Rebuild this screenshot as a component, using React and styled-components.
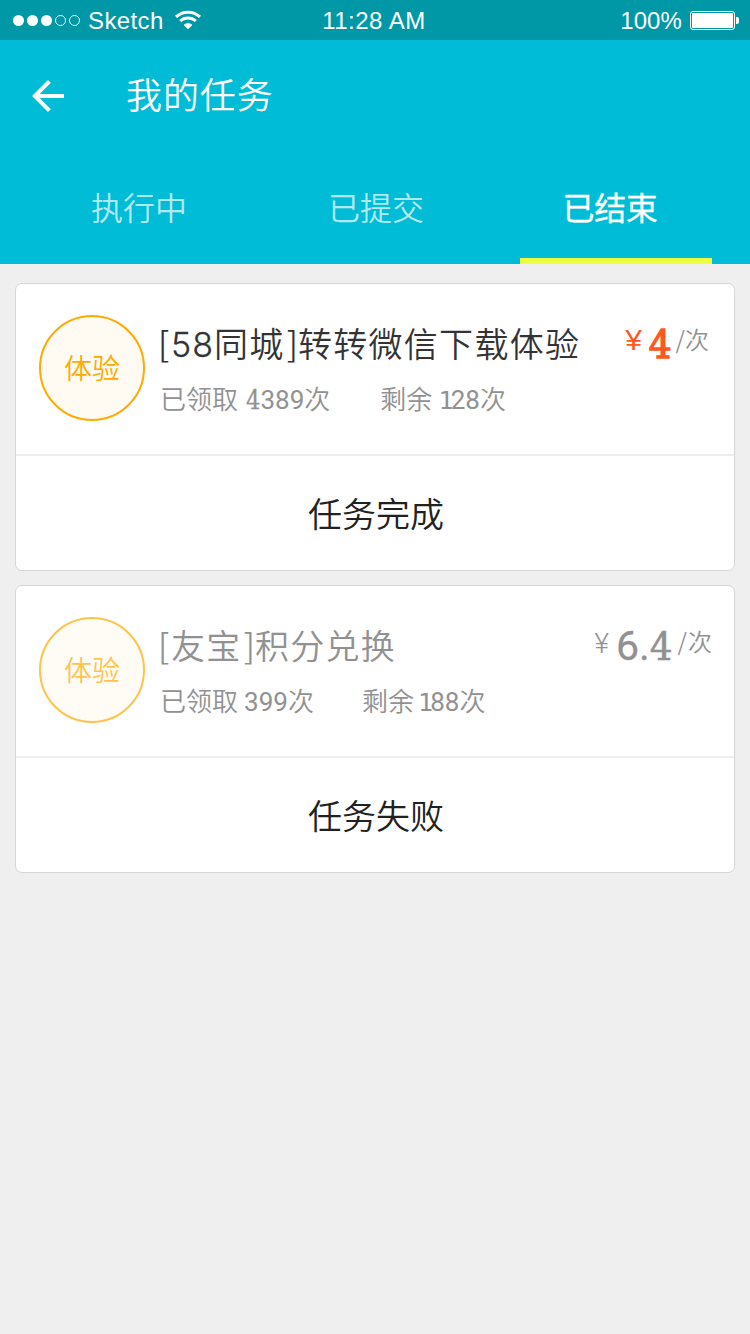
import React from "react";
import styled, { createGlobalStyle } from "styled-components";

const cjk = '"Noto Sans CJK SC", sans-serif';

const GlobalStyle = createGlobalStyle`
  * { box-sizing: border-box; }
  body { margin: 0; background: #efefef; }
`;

const Screen = styled.div`
  width: 750px;
  min-height: 1334px;
  background: #efefef;
  font-family: ${cjk};
  white-space: nowrap;
`;

const StatusBar = styled.div`
  display: grid;
  grid-template-columns: 1fr auto 1fr;
  align-items: center;
  height: 40px;
  padding: 0 11px 0 12px;
  background: #0097a7;
  color: #fff;
  font: 24px/42px "Liberation Sans", sans-serif;
`;

const StatusGroup = styled.div`
  display: flex;
  align-items: center;
  justify-content: ${(p) => (p.$end ? "flex-end" : "flex-start")};
  gap: 8px;
  height: 40px;
`;

const StatusText = styled.span`
  height: 40px;
  padding-right: ${(p) => p.$trail || 0}px;
  letter-spacing: ${(p) => p.$spacing || 0}px;
`;

const AppBar = styled.header`
  display: flex;
  align-items: center;
  height: 112px;
  padding-left: 24px;
  gap: 54px;
  background: #00bcd7;
`;

const PageTitle = styled.h1`
  margin: 0;
  color: #fff;
  font-size: 36px;
  font-weight: 350;
  line-height: 107px;
  height: 112px;
  letter-spacing: 0.9px;
`;

const Tabs = styled.nav`
  display: flex;
  height: 112px;
  padding-left: 43px;
  gap: 45px;
  background: #00bcd7;
`;

const Tab = styled.div`
  width: 192px;
  height: 112px;
  text-align: center;
  font-size: 32px;
  line-height: 108px;
  font-weight: ${(p) => (p.$active ? 400 : 350)};
  color: ${(p) => (p.$active ? "#fff" : "rgba(255, 255, 255, 0.7)")};
  ${(p) =>
    p.$active &&
    `
    margin-left: 3px;
    padding-right: 12px;
    letter-spacing: -0.3px;
    border-bottom: 6px solid #eeff41;
    -webkit-text-stroke: 0.3px #fff;
  `}
`;

const List = styled.main`
  display: flex;
  flex-direction: column;
  gap: 14px;
  padding: 19px 15px;
`;

const Card = styled.article`
  height: 288px;
  border: 1px solid #d6d6d6;
  border-radius: 7px;
  background: #fff;
`;

const Summary = styled.div`
  display: flex;
  height: 172px;
  padding: 31px 0 0 23px;
  border-bottom: 2px solid #eeeeee;
`;

const Badge = styled.div`
  flex: none;
  width: 106px;
  height: 106px;
  border: 2px solid #ffaa00;
  border-radius: 50%;
  background: #fffaf2;
  color: #ffaa00;
  font-size: 28px;
  font-weight: 350;
  line-height: 100px;
  text-align: center;
  opacity: ${(p) => (p.$faded ? 0.7 : 1)};
`;

const Details = styled.div`
  flex: 1;
  padding-left: 13px;
`;

const TaskTitle = styled.h2`
  margin: 0;
  height: 56px;
  font: 350 34px/56px ${cjk};
  letter-spacing: 1.3px;
  color: ${(p) => (p.$muted ? "#919191" : "#333")};
`;

const TitleDigits = styled.span`
  font-family: Inter, sans-serif;
  font-weight: 300;
  font-size: 34px;
  letter-spacing: 1px;
  -webkit-text-stroke: 0.3px currentColor;
`;

const OpenBracket = styled.span`
  letter-spacing: 1.8px;
`;

const CloseBracket = styled.span`
  padding-left: 2px;
  letter-spacing: 0;
`;

const Stats = styled.div`
  display: flex;
  gap: ${(p) => p.$gap}px;
  padding-left: 2px;
  color: #919191;
  font: 350 26px/58px Roboto, ${cjk};
`;

const Stat = styled.span`
  display: flex;
  gap: ${(p) => p.$gap}px;
`;

const Digits = styled.span`
  font-weight: 400;
`;

const SlabFour = styled.span`
  font-family: "DejaVu Serif Condensed", "DejaVu Serif", serif;
  font-stretch: condensed;
  font-size: 0.97em;
  font-weight: 400;
  -webkit-text-stroke: 0.01em currentColor;
`;

const SlabOne = styled.span`
  font-family: "DejaVu Sans Mono", monospace;
  font-size: 0.96em;
  margin-left: -0.08em;
  letter-spacing: -0.11em;
`;

const Price = styled.div`
  display: flex;
  height: 56px;
  padding-right: ${(p) => p.$right}px;
  color: ${(p) => (p.$muted ? "#919191" : "#ff5722")};
`;

const Currency = styled.span`
  font: ${(p) =>
    p.$muted
      ? "300 28px/53px Roboto, sans-serif"
      : '400 30px/50px "Liberation Sans", sans-serif'};
  margin-right: 7px;
`;

const Amount = styled.span`
  font: 400 41px/58px Roboto, sans-serif;
  -webkit-text-stroke: ${(p) => (p.$muted ? 0.3 : 0.4)}px currentColor;

  ${SlabFour} {
    -webkit-text-stroke: ${(p) => (p.$muted ? 0.6 : 1.4)}px currentColor;
  }
`;

const Unit = styled.span`
  margin-left: ${(p) => (p.$muted ? 5 : 4)}px;
  color: #919191;
  font-size: 24px;
  font-weight: 350;
  line-height: 47px;
  letter-spacing: ${(p) => (p.$muted ? 1 : 0)}px;
`;

const Result = styled.div`
  height: 114px;
  padding: 1px 0 0 2px;
  color: #212121;
  font-size: 34px;
  font-weight: 350;
  line-height: 112px;
  text-align: center;
`;

const WifiIcon = styled.svg`
  margin-left: 2px;
`;

const SignalDots = () => (
  <svg width="68" height="14" viewBox="0 0 68 14" fill="#fff">
    {[6.5, 20.5, 34.5].map((x) => (
      <circle key={x} cx={x} cy="7.5" r="5.5" />
    ))}
    {[48.5, 62.5].map((x) => (
      <circle key={x} cx={x} cy="7.5" r="5" fill="none" stroke="#fff" />
    ))}
  </svg>
);

const Wifi = () => (
  <WifiIcon width="28" height="20" viewBox="0 0 28 20" fill="none" stroke="#fff">
    <path d="M2 6.9a17.5 17.5 0 0 1 24 0" strokeWidth="3" />
    <path d="M6.2 11.1a11.4 11.4 0 0 1 15.6 0" strokeWidth="2.8" />
    <path d="M14 18.8l-4-3.7a6 6 0 0 1 8 0z" fill="#fff" stroke="#fff" strokeWidth="0.8" />
  </WifiIcon>
);

const Battery = () => (
  <svg width="49" height="20" viewBox="0 0 49 20" fill="#fff">
    <rect x="0.5" y="1.5" width="44" height="18" rx="2.5" fill="none" stroke="#fff" />
    <rect x="2" y="3" width="41" height="15" rx="1" />
    <path d="M46 7h1a2 2 0 0 1 2 2v3a2 2 0 0 1-2 2h-1z" />
  </svg>
);

const BackArrow = () => (
  <svg width="48" height="48" viewBox="0 0 24 24" fill="#fff">
    <path d="M20 11H7.83l5.59-5.59L12 4l-8 8 8 8 1.41-1.41L7.83 13H20v-2z" />
  </svg>
);

const SlabNumber = ({ value }) =>
  value.split("").map((c, i) => {
    if (c === "4") return <SlabFour key={i}>{c}</SlabFour>;
    if (c === "1") return <SlabOne key={i}>{c}</SlabOne>;
    return c;
  });

const tasks = [
  {
    source: "58同城",
    name: "转转微信下载体验",
    taken: "4389",
    left: "128",
    price: "4",
    result: "任务完成",
    numberGap: 8,
    statGap: 50,
    right: 25,
  },
  {
    source: "友宝",
    name: "积分兑换",
    taken: "399",
    left: "188",
    price: "6.4",
    result: "任务失败",
    muted: true,
    numberGap: 6,
    statGap: 48,
    right: 21,
  },
];

const TaskStat = ({ label, value, gap }) => (
  <Stat $gap={gap}>
    <span>{label}</span>
    <span>
      <Digits>
        <SlabNumber value={value} />
      </Digits>
      次
    </span>
  </Stat>
);

const TaskCard = ({ task }) => (
  <Card>
    <Summary>
      <Badge $faded={task.muted}>体验</Badge>
      <Details>
        <TaskTitle $muted={task.muted}>
          <OpenBracket>[</OpenBracket>
          {task.source
            .split(/(\d+)/)
            .map((part, i) => (i % 2 ? <TitleDigits key={i}>{part}</TitleDigits> : part))}
          <CloseBracket>]</CloseBracket>
          {task.name}
        </TaskTitle>
        <Stats $gap={task.statGap}>
          <TaskStat label="已领取" value={task.taken} gap={task.numberGap} />
          <TaskStat label="剩余" value={task.left} gap={task.numberGap} />
        </Stats>
      </Details>
      <Price $muted={task.muted} $right={task.right}>
        <Currency $muted={task.muted}>¥</Currency>
        <Amount $muted={task.muted}>
          <SlabNumber value={task.price} />
        </Amount>
        <Unit $muted={task.muted}>/次</Unit>
      </Price>
    </Summary>
    <Result>{task.result}</Result>
  </Card>
);

export default function App() {
  return (
    <Screen>
      <GlobalStyle />
      <StatusBar>
        <StatusGroup>
          <SignalDots />
          <StatusText $spacing={0.4}>Sketch</StatusText>
          <Wifi />
        </StatusGroup>
        <StatusText $spacing={0.5} $trail={3}>11:28 AM</StatusText>
        <StatusGroup $end>
          <StatusText $spacing={0.1}>100%</StatusText>
          <Battery />
        </StatusGroup>
      </StatusBar>
      <AppBar>
        <BackArrow />
        <PageTitle>我的任务</PageTitle>
      </AppBar>
      <Tabs>
        <Tab>执行中</Tab>
        <Tab>已提交</Tab>
        <Tab $active>已结束</Tab>
      </Tabs>
      <List>
        {tasks.map((task) => (
          <TaskCard key={task.name} task={task} />
        ))}
      </List>
    </Screen>
  );
}
